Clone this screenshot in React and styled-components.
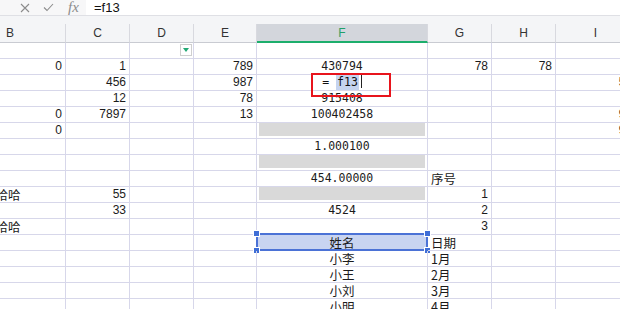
import React from 'react'
import styled, { createGlobalStyle, css } from 'styled-components'

const Global = createGlobalStyle`
  html, body {
    margin: 0;
    padding: 0;
    background: #ffffff;
    overflow: hidden;
  }
  body {
    font-family: 'Liberation Sans', Arial, sans-serif;
  }
`

const COLS = [111, 64, 64, 63, 171, 64, 64, 80]
const LETTERS = ['B', 'C', 'D', 'E', 'F', 'G', 'H', 'I']
const GRID = COLS.map((w) => `${w}px`).join(' ')

const Page = styled.div`
  width: 620px;
  height: 309px;
  overflow: hidden;
  position: relative;
`

const FormulaBar = styled.div`
  display: flex;
  height: 15px;
  border-bottom: 1px solid #dfe0e5;
  background: #f7f7f8;
`

const Tools = styled.div`
  display: flex;
  align-items: center;
  width: 86px;
  padding-left: 20px;
  gap: 13px;
  box-sizing: border-box;
`

const Fx = styled.span`
  font-family: 'Liberation Serif', serif;
  font-style: italic;
  font-size: 15px;
  line-height: 15px;
  color: #8c8c8c;
  margin-left: 1px;
`

const FormulaInput = styled.div`
  flex: 1;
  background: #ffffff;
  padding-left: 8px;
  font-size: 13px;
  line-height: 15px;
  color: #111;
`

const HeaderWrap = styled.div`
  padding-top: 8px;
  background: #f4f5f7;
`

const Sheet = styled.div`
  position: relative;
  margin-left: -45px;
  width: ${COLS.reduce((a, b) => a + b, 0)}px;
`

const Row = styled.div`
  display: grid;
  grid-template-columns: ${GRID};
`

const HeadCell = styled.div`
  height: 19px;
  box-sizing: border-box;
  border-right: 1px solid #d8d9df;
  border-bottom: 1px solid #c9cbd2;
  text-align: center;
  font-size: 12px;
  line-height: 18px;
  color: #333;
  ${({ $active }) =>
    $active &&
    css`
      background: #d3d6dc;
      color: #21a06a;
      border-bottom: 2px solid #1cae6c;
    `}
`

const Cell = styled.div`
  position: relative;
  height: 16px;
  box-sizing: border-box;
  border-right: 1px solid #d7d7ea;
  border-bottom: 1px solid #d7d7ea;
  padding: 0 3px;
  font-size: 12px;
  line-height: 15px;
  color: #1b1b1b;
  white-space: nowrap;
  text-align: ${({ $align }) => $align || 'right'};
  ${({ $mono }) =>
    $mono &&
    css`
      font-family: 'DejaVu Sans Mono', monospace;
      font-size: 11.5px;
    `}
  ${({ $cjk }) =>
    $cjk &&
    css`
      font-family: 'Noto Sans CJK SC', sans-serif;
      font-size: 12.5px;
      line-height: 15px;
    `}
`

const GrayFill = styled.div`
  height: 13px;
  margin: 0 -1px;
  background: #d9d9d9;
`

const FilterBox = styled.div`
  position: absolute;
  right: 1px;
  top: 1px;
  width: 12px;
  height: 12px;
  box-sizing: border-box;
  border: 1px solid #cfcfcf;
  background: #fff;
  display: flex;
  align-items: center;
  justify-content: center;
`

const EditText = styled.span`
  font-family: 'DejaVu Sans Mono', monospace;
  font-size: 11.5px;
  color: #111;
`

const Picked = styled.span`
  background: #c6d4ef;
  padding: 1px 1px;
`

const Caret = styled.span`
  display: inline-block;
  width: 1px;
  height: 13px;
  background: #222;
  margin-left: 2px;
  vertical-align: -2px;
`

const Selection = styled.div`
  position: absolute;
  left: -1px;
  right: -1px;
  top: -2px;
  bottom: -1px;
  border: 2px solid #4b72d6;
  background: #c8d4f1;
`

const Handle = styled.span`
  position: absolute;
  width: 5px;
  height: 5px;
  background: #3f6ed6;
  border: 1px solid #fff;
  ${({ $x }) => ($x === 'l' ? 'left: -5px;' : 'right: -5px;')}
  ${({ $y }) => ($y === 't' ? 'top: -5px;' : 'bottom: -5px;')}
`

const CellText = styled.span`
  position: relative;
`

// annotation drawn over the sheet, around the edited cell
const RedBox = styled.div`
  position: absolute;
  left: ${311 + 45}px;
  top: 30px;
  width: 80px;
  height: 24px;
  box-sizing: border-box;
  border: 2px solid #e8141c;
  pointer-events: none;
`

// column index: 0 B, 1 C, 2 D, 3 E, 4 F, 5 G, 6 H, 7 I
const ROWS = [
  { 2: { filter: true } },
  { 0: '0', 1: '1', 3: '789', 4: { v: '430794', f: true }, 5: '78', 6: '78' },
  { 1: '456', 3: '987', 4: { edit: true }, 7: '56' },
  { 1: '12', 3: '78', 4: { v: '915408', f: true } },
  { 0: '0', 1: '7897', 3: '13', 4: { v: '100402458', f: true }, 7: '98' },
  { 0: '0', 4: { gray: true }, 7: '99' },
  { 4: { v: '1.000100', f: true } },
  { 4: { gray: true } },
  { 4: { v: '454.00000', f: true }, 5: { v: '序号', cjk: true } },
  { 0: { v: '哈哈哈哈哈', cjk: true }, 1: '55', 4: { gray: true }, 5: '1' },
  { 1: '33', 4: { v: '4524', f: true }, 5: '2' },
  { 0: { v: '哈哈哈哈哈', cjk: true }, 5: '3' },
  { 4: { v: '姓名', f: true, cjk: true, sel: true }, 5: { v: '日期', cjk: true } },
  { 4: { v: '小李', f: true, cjk: true }, 5: { v: '1月', cjk: true } },
  { 4: { v: '小王', f: true, cjk: true }, 5: { v: '2月', cjk: true } },
  { 4: { v: '小刘', f: true, cjk: true }, 5: { v: '3月', cjk: true } },
  { 4: { v: '小明', f: true, cjk: true }, 5: { v: '4月', cjk: true } },
]

const renderCell = (data, i) => {
  if (data === undefined) return <Cell key={i} />
  if (typeof data === 'string') return <Cell key={i}>{data}</Cell>

  if (data.filter) {
    return (
      <Cell key={i}>
        <FilterBox>
          <svg width="6" height="4" viewBox="0 0 6 4">
            <path d="M0 0 L6 0 L3 4 Z" fill="#22a874" />
          </svg>
        </FilterBox>
      </Cell>
    )
  }
  if (data.gray) {
    return (
      <Cell key={i}>
        <GrayFill />
      </Cell>
    )
  }
  if (data.edit) {
    return (
      <Cell key={i} $align="center">
        <EditText>
          = <Picked>f13</Picked>
          <Caret />
        </EditText>
      </Cell>
    )
  }
  const align = data.f ? 'center' : data.cjk ? 'left' : 'right'
  return (
    <Cell key={i} $align={align} $mono={data.f && !data.cjk} $cjk={data.cjk}>
      {data.sel && (
        <Selection>
          <Handle $x="l" $y="t" />
          <Handle $x="r" $y="t" />
          <Handle $x="l" $y="b" />
          <Handle $x="r" $y="b" />
        </Selection>
      )}
      <CellText>{data.v}</CellText>
    </Cell>
  )
}

const App = () => {
  return (
    <Page>
      <Global />
      <FormulaBar>
        <Tools>
          <svg width="10" height="10" viewBox="0 0 10 10">
            <path d="M1 1 L9 9 M9 1 L1 9" stroke="#8c8c8c" strokeWidth="1.1" />
          </svg>
          <svg width="11" height="9" viewBox="0 0 11 9">
            <path d="M1 4.5 L4 7.5 L10 1" stroke="#8c8c8c" strokeWidth="1.1" fill="none" />
          </svg>
          <Fx>fx</Fx>
        </Tools>
        <FormulaInput>=f13</FormulaInput>
      </FormulaBar>

      <HeaderWrap>
        <Sheet>
          <Row>
            {LETTERS.map((l) => (
              <HeadCell key={l} $active={l === 'F'}>
                {l}
              </HeadCell>
            ))}
          </Row>
        </Sheet>
      </HeaderWrap>

      <Sheet>
        {ROWS.map((row, r) => (
          <Row key={r}>{COLS.map((_, c) => renderCell(row[c], c))}</Row>
        ))}
        <RedBox />
      </Sheet>
    </Page>
  )
}

export default App
